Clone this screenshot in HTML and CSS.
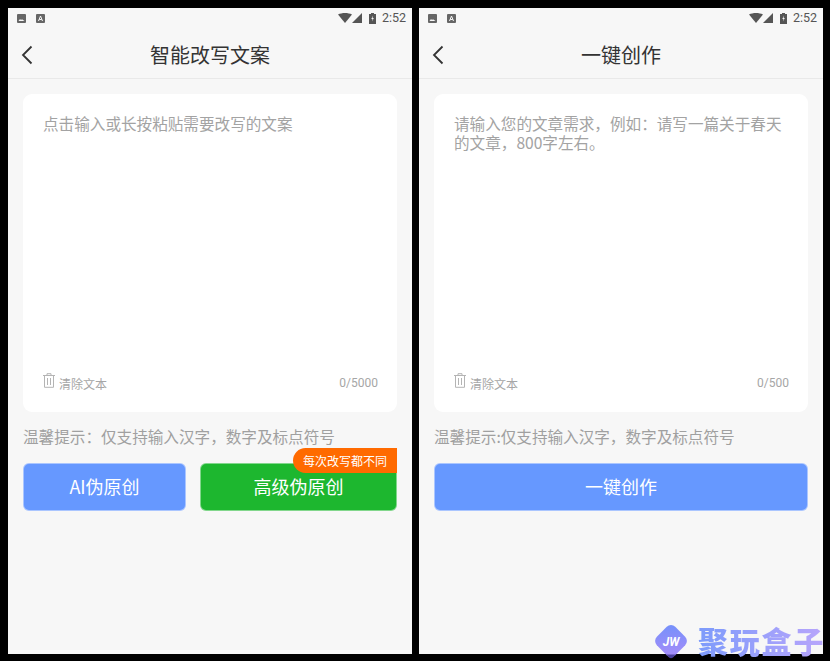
FILE: index.html
```html
<!DOCTYPE html>
<html lang="zh">
<head>
<meta charset="utf-8">
<title>改写与创作</title>
<link rel="stylesheet" href="styles.css">
</head>
<body>
<main class="stage">
  <section class="phone">
    <div class="status">
      <div class="status-left">
        <svg class="note" viewBox="0 0 9 9"><rect width="9" height="9" rx="1" fill="#666"/><path d="M1.500 7 3 5l1 1 1-.8L7.500 7z" fill="#f7f7f7"/></svg>
        <svg class="note" viewBox="0 0 9 9"><rect width="9" height="9" rx="1" fill="#666"/><path d="M2.500 7 4.500 2l2 5M3.300 5.500h2.400" fill="none" stroke="#f7f7f7" stroke-width="1"/></svg>
      </div>
      <div class="status-right">
        <svg class="wifi" viewBox="0 0 14 10"><path d="M0 1.500C4-.5 10-.5 14 1.500L7 10z" fill="#555"/></svg>
        <svg class="signal" viewBox="0 0 10 10"><path d="M10 0v10H0z" fill="#555"/></svg>
        <svg class="battery" viewBox="0 0 7 11"><path d="M2 0h3v1h2v10H0V1h2z" fill="#555"/><path d="M4 2.500 2.300 6h1.200L3 8.500 4.800 5H3.600z" fill="#f7f7f7"/></svg>
        <span class="clock">2:52</span>
      </div>
    </div>
    <header class="nav">
      <svg class="back" viewBox="0 0 12 20"><path d="M10.500 1.500 2 10l8.500 8.500" fill="none" stroke="#333" stroke-width="1.800"/></svg>
      <h1 class="title">智能改写文案</h1>
    </header>
    <div class="content">
      <div class="card">
        <p class="placeholder">点击输入或长按粘贴需要改写的文案</p>
        <div class="card-foot">
          <span class="clear">
            <svg class="trash" viewBox="0 0 12 15"><path d="M0 2.500h12M4 2.500V.7h4v1.800M1.500 2.500v11.800h9V2.500M4.500 5v7M7.500 5v7" fill="none" stroke="#b4b4b4" stroke-width="1"/></svg>
            清除文本
          </span>
          <span class="count">0/5000</span>
        </div>
      </div>
      <p class="tip">温馨提示：仅支持输入汉字，数字及标点符号</p>
      <div class="actions">
        <button class="btn btn-blue btn-small">AI伪原创</button>
        <button class="btn btn-green btn-wide">高级伪原创<span class="badge">每次改写都不同</span></button>
      </div>
    </div>
  </section>

  <section class="phone">
    <div class="status">
      <div class="status-left">
        <svg class="note" viewBox="0 0 9 9"><rect width="9" height="9" rx="1" fill="#666"/><path d="M1.500 7 3 5l1 1 1-.8L7.500 7z" fill="#f7f7f7"/></svg>
        <svg class="note" viewBox="0 0 9 9"><rect width="9" height="9" rx="1" fill="#666"/><path d="M2.500 7 4.500 2l2 5M3.300 5.500h2.400" fill="none" stroke="#f7f7f7" stroke-width="1"/></svg>
      </div>
      <div class="status-right">
        <svg class="wifi" viewBox="0 0 14 10"><path d="M0 1.500C4-.5 10-.5 14 1.500L7 10z" fill="#555"/></svg>
        <svg class="signal" viewBox="0 0 10 10"><path d="M10 0v10H0z" fill="#555"/></svg>
        <svg class="battery" viewBox="0 0 7 11"><path d="M2 0h3v1h2v10H0V1h2z" fill="#555"/><path d="M4 2.500 2.300 6h1.200L3 8.500 4.800 5H3.600z" fill="#f7f7f7"/></svg>
        <span class="clock">2:52</span>
      </div>
    </div>
    <header class="nav">
      <svg class="back" viewBox="0 0 12 20"><path d="M10.500 1.500 2 10l8.500 8.500" fill="none" stroke="#333" stroke-width="1.800"/></svg>
      <h1 class="title">一键创作</h1>
    </header>
    <div class="content">
      <div class="card">
        <p class="placeholder">请输入您的文章需求，例如：请写一篇关于春天的文章，800字左右。</p>
        <div class="card-foot">
          <span class="clear">
            <svg class="trash" viewBox="0 0 12 15"><path d="M0 2.500h12M4 2.500V.7h4v1.800M1.500 2.500v11.800h9V2.500M4.500 5v7M7.500 5v7" fill="none" stroke="#b4b4b4" stroke-width="1"/></svg>
            清除文本
          </span>
          <span class="count">0/500</span>
        </div>
      </div>
      <p class="tip">温馨提示:仅支持输入汉字，数字及标点符号</p>
      <div class="actions">
        <button class="btn btn-blue btn-full">一键创作</button>
      </div>
    </div>
  </section>
</main>
<div class="watermark">
  <svg class="wm-logo" viewBox="0 0 36 36">
    <defs><linearGradient id="wmg" x1="0" y1="0" x2="1" y2="1"><stop offset="0" stop-color="#7391fb"/><stop offset="1" stop-color="#a98cf8"/></linearGradient></defs>
    <rect x="5" y="5" width="26" height="26" rx="6" transform="rotate(45 18 18)" fill="url(#wmg)"/>
    <path d="M13 31.500h10l-3 3q-2 1.300-4 0z" fill="#4a3f9a"/>
    <text x="18" y="22.500" text-anchor="middle" class="wm-jw">JW</text>
  </svg>
  <span class="wm-text">聚玩盒子</span>
</div>
</body>
</html>
```

FILE: styles.css
```css
* {
  box-sizing: border-box;
}

html,
body {
  margin: 0;
  height: 100%;
  background: #000;
  overflow: hidden;
}

body {
  font-family: "Noto Sans CJK SC", "Roboto", sans-serif;
}

.stage {
  display: flex;
  gap: 7px;
  padding: 8px 7px 7px 8px;
  height: 661px;
}

.phone {
  width: 404px;
  background: #f7f7f7;
  display: flex;
  flex-direction: column;
}

.status {
  height: 26px;
  padding: 0 6px 6px 9px;
  display: flex;
  justify-content: space-between;
  align-items: center;
  flex: none;
}

.status-left {
  display: flex;
  gap: 10px;
}

.note {
  width: 9px;
  height: 9px;
  display: block;
}

.status-right {
  display: flex;
  align-items: center;
}

.wifi {
  width: 14px;
  height: 10px;
}

.signal {
  width: 10px;
  height: 10px;
}

.battery {
  width: 7px;
  height: 11px;
  margin-left: 7px;
}

.clock {
  font: 12.500px/14px "Roboto", sans-serif;
  color: #555;
  margin-left: 6px;
}

.nav {
  position: relative;
  height: 45px;
  flex: none;
  padding-bottom: 2px;
  border-bottom: 1px solid #e9e9e9;
  display: flex;
  align-items: center;
  justify-content: center;
}

.back {
  position: absolute;
  left: 13px;
  top: 11px;
  width: 12px;
  height: 20px;
}

.title {
  margin: 0;
  font-size: 20px;
  font-weight: 400;
  color: #333;
  line-height: 28px;
}

.content {
  padding: 15px 15px 0;
}

.card {
  height: 318px;
  background: #fff;
  border-radius: 9px;
  padding: 20px 20px 19px;
  display: flex;
  flex-direction: column;
  justify-content: space-between;
}

.placeholder {
  margin: 0;
  font-size: 15.600px;
  line-height: 19px;
  color: #a3a3a3;
}

.card-foot {
  display: flex;
  justify-content: space-between;
  align-items: center;
  height: 20px;
}

.clear {
  display: flex;
  align-items: center;
  gap: 4px;
  font-size: 12px;
  color: #a6a6a6;
}

.trash {
  width: 12px;
  height: 15px;
  margin-top: -5px;
}

.count {
  font: 12px/14px "Roboto", sans-serif;
  color: #a6a6a6;
  margin-right: -1px;
}

.tip {
  margin: 14px 0 0;
  font-size: 15.600px;
  line-height: 21px;
  color: #a0a0a0;
}

.actions {
  display: flex;
  gap: 14px;
  margin-top: 16px;
}

.btn {
  position: relative;
  height: 48px;
  border: 1px solid rgba(255, 255, 255, 0.45);
  border-radius: 6px;
  color: #fff;
  font-family: inherit;
  font-size: 18px;
  padding: 0 0 2px;
}

.btn-blue {
  background: #6698ff;
}

.btn-green {
  background: #1db72f;
}

.btn-small {
  width: 163px;
}

.btn-wide {
  width: 197px;
}

.btn-full {
  width: 100%;
}

.badge {
  position: absolute;
  right: -1px;
  top: -16px;
  width: 104px;
  height: 25px;
  background: #ff6a00;
  border-radius: 13px 0 0 13px;
  font-size: 12px;
  line-height: 25px;
  text-align: center;
  color: #fff;
}

.watermark {
  position: absolute;
  left: 653px;
  top: 623px;
  width: 177px;
  height: 36px;
  display: flex;
  align-items: center;
  gap: 9px;
}

.wm-logo {
  width: 36px;
  height: 36px;
  flex: none;
}

.wm-jw {
  font: italic 700 12px "Roboto", sans-serif;
  fill: #fff;
}

.wm-text {
  margin-top: -3px;
  font-size: 30px;
  line-height: 36px;
  font-weight: 900;
  white-space: nowrap;
  letter-spacing: 1.800px;
  background: linear-gradient(90deg, #7d9bfb, #b8a5fb);
  -webkit-background-clip: text;
  background-clip: text;
  color: transparent;
}
```
